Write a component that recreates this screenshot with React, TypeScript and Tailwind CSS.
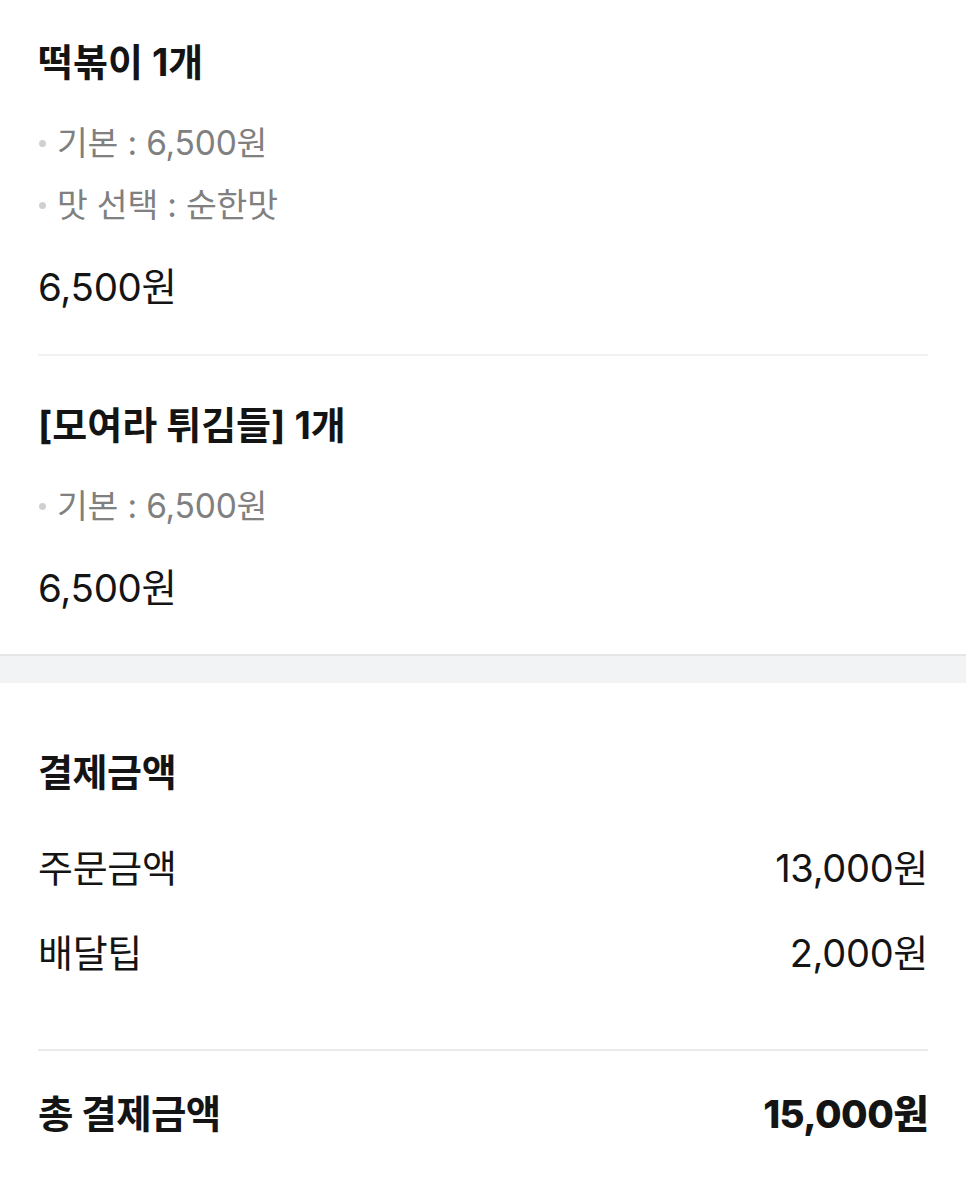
import React from "react";

const font = { fontFamily: '"Inter", "Noto Sans CJK KR", sans-serif' };

type Item = {
  name: string;
  options: string[];
  price: string;
};

const items: Item[] = [
  { name: "떡볶이 1개", options: ["기본 : 6,500원", "맛 선택 : 순한맛"], price: "6,500원" },
  { name: "[모여라 튀김들] 1개", options: ["기본 : 6,500원"], price: "6,500원" },
];

function OrderItem({ item, first }: { item: Item; first: boolean }) {
  return (
    <div className={first ? "pt-[30px] pb-[34px]" : "pt-[37px] pb-[33px]"}>
      <div className="flex h-[64px] items-center text-[38px] font-bold tracking-[0px] text-[#141414]">
        {item.name}
      </div>
      <ul className="mt-[18px]">
        {item.options.map((opt) => (
          <li key={opt} className="flex h-[62px] items-center text-[33.5px] tracking-[-0.2px] text-[#808080]">
            <span className="mr-[11px] ml-[1px] h-[7px] w-[7px] rounded-full bg-[#d0d0d0]" />
            {opt}
          </li>
        ))}
      </ul>
      <div className="mt-[20px] flex h-[64px] items-center text-[38.5px] tracking-[-0.3px] text-[#141414]">
        {item.price}
      </div>
    </div>
  );
}

export default function App() {
  return (
    <div className="min-h-[1181px] w-[966px] bg-white" style={font}>
      <div className="px-[38px]">
        {items.map((item, i) => (
          <div key={item.name}>
            {i > 0 && <div className="h-[2px] bg-[#f1f1f1]" />}
            <OrderItem item={item} first={i === 0} />
          </div>
        ))}
      </div>

      <div className="h-[29px] border-t-2 border-[#e4e5e7] bg-[#f2f3f5]" />

      <div className="px-[38px] pt-[57px]">
        <div className="flex h-[64px] items-center text-[38px] font-bold tracking-[-0.4px] text-[#141414]">
          결제금액
        </div>
        <div className="mt-[22px]">
          <div className="flex h-[85px] items-center justify-between text-[38px] tracking-[-0.3px] text-[#141414]">
            <span>주문금액</span>
            <span>13,000원</span>
          </div>
          <div className="flex h-[85px] items-center justify-between text-[38px] tracking-[-0.3px] text-[#141414]">
            <span>배달팁</span>
            <span>2,000원</span>
          </div>
        </div>
        <div className="mt-[53px] h-[2px] bg-[#ebebeb]" />
        <div className="mt-[32px] flex h-[64px] items-center justify-between text-[38.5px] font-bold tracking-[-0.6px] text-[#141414]">
          <span>총 결제금액</span>
          <span className="font-extrabold">15,000원</span>
        </div>
      </div>
    </div>
  );
}
